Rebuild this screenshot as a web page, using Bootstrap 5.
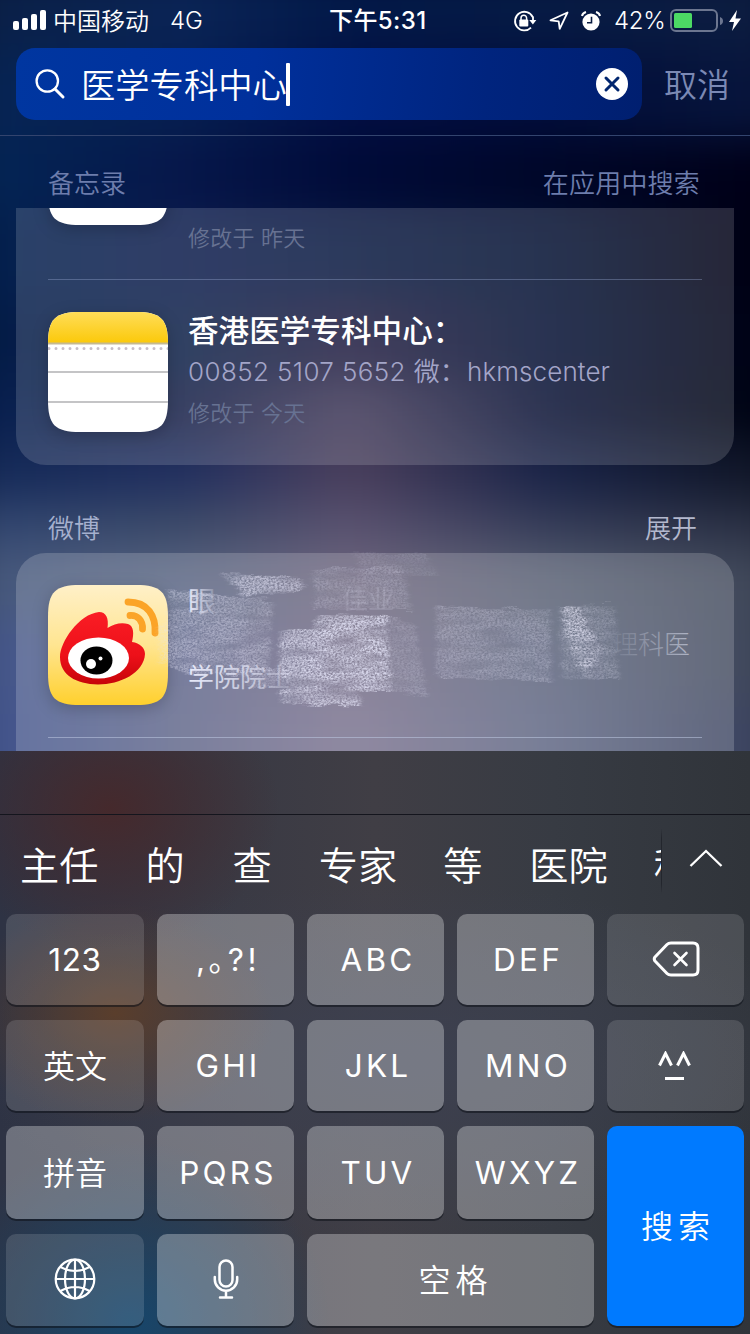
<!DOCTYPE html>
<html lang="zh-CN">
<head>
<meta charset="utf-8">
<meta name="viewport" content="width=device-width, initial-scale=1">
<title>搜索</title>
<link href="https://cdn.jsdelivr.net/npm/bootstrap@5.3.0/dist/css/bootstrap.min.css" rel="stylesheet">
<style>
body{margin:0;background:#000;color:#fff;font-family:Inter,"Noto Sans CJK SC",sans-serif;overflow:hidden}
.phone{width:750px;height:1334px;isolation:isolate}
.wallpaper{inset:-40px -40px 543px;z-index:-1;filter:blur(22px)}
.wallpaper div{flex:none}
svg{display:block;flex:none}
.status{height:48px;padding:0 8px 7px 13px;font-size:24px;line-height:40px}
.clock{left:329px;top:1px;font-weight:500;letter-spacing:.4px;white-space:nowrap}
.search-row{height:88px;padding-left:16px;border-bottom:1px solid #33446e}
.search-box{width:626px;height:72px;border-radius:19px;background:linear-gradient(95deg,#0036a0,#00309c 38%,#00247e 75%,#001f70);padding:0 14px 0 19px}
.query{font-size:34.3px;line-height:70px;font-weight:350;margin-left:15px;padding-top:4px}
.caret{width:4px;height:43px;border-radius:1px;background:#fff;margin-left:-1px}
.cancel{font-size:33px;line-height:74px;margin-left:22px;color:#7b89b4;font-weight:350}
.section-title{font-size:26px;line-height:36px;padding:0 50px 0 48px;font-weight:350}
.pinned{height:72px;padding-top:30px;color:#6d7dac}
.results{height:543px}
.glass{margin:0 16px;background:rgba(255,255,255,.15);border:0;border-radius:30px;color:#fff;padding:0 32px}
.glass.clipped{margin-top:-135px}
.glass.bright{background:rgba(255,255,255,.18);height:240px}
.item{display:flex;gap:21px;padding-top:32px}
.item + .item{border-top:1px solid rgba(160,178,220,.35)}
.item-text{margin-left:-1px}
.app{filter:drop-shadow(0 4px 8px rgba(0,0,0,.2))}
.title{font-size:30.6px;line-height:38px;font-weight:500}
.desc{font-size:26px;line-height:42px;color:#a3a5c8;font-weight:350;white-space:nowrap;letter-spacing:.2px}
.when{font-size:22px;line-height:36px;color:#677292;font-weight:350;letter-spacing:.2px}
.keyboard{height:583px;background:
 radial-gradient(ellipse 170px 140px at 110px 58px,#45292c 0,#44282b88 45%,transparent 100%),
 radial-gradient(ellipse 160px 110px at 115px 262px,#5a3e2c 0,#573c2b88 45%,transparent 100%),
 radial-gradient(ellipse 200px 180px at 130px 570px,#17466b 0,#1c4263aa 45%,transparent 100%),
 radial-gradient(ellipse 430px 180px at 400px 310px,#3c4050 0,transparent 100%),
 linear-gradient(90deg,#2e3344 0,#3a3a44 32%,#403e45 50%,#373b43 74%,#30343a 100%)}
.assist{height:64px;border-bottom:1px solid #14151d}
.cands{height:99px;font-size:39.2px;line-height:102px;font-weight:350}
.cand-list{width:661px;padding-left:20px;height:99px;white-space:nowrap}
.rule{width:1px;height:66px;margin-top:13px;background:linear-gradient(transparent,#23262d 15%,#23262d 85%,transparent)}
.keys{display:grid;grid-template-columns:138px repeat(4,137px);grid-template-rows:91px 91px 93px 92px;column-gap:13px;row-gap:15px;padding:0 6px}
.key{border:0;border-radius:10px;padding:0;color:#fff;background:rgba(255,255,255,.3);font-size:31.5px;line-height:1;box-shadow:0 2px 0 rgba(13,16,24,.55);display:flex;align-items:center;justify-content:center;letter-spacing:3.2px;text-indent:5px;font-weight:375}
.key.dim{background:rgba(255,255,255,.135)}
.key.cjk{font-size:32px;letter-spacing:0;text-indent:0;padding-top:2px;font-weight:350}
.key.go{background:#007aff;grid-row:3/5;grid-column:5}
.key.wide{grid-column:3/5}
.smudge{left:150px;top:-6px}
</style>
</head>
<body>
<div class="phone position-relative overflow-hidden d-flex flex-column">
  <div class="wallpaper position-absolute d-flex flex-column" id="wallpaper"></div>

  <header class="status position-relative d-flex align-items-center">
    <svg width="34" height="20" viewBox="0 0 34 20" style="margin-top:-2px" fill="#fff"><rect y="11" width="6" height="9" rx="2"/><rect x="9" y="8" width="6" height="12" rx="2"/><rect x="18" y="4" width="6" height="16" rx="2"/><rect x="27" width="6" height="20" rx="2"/></svg>
    <span style="margin-left:6px;padding-top:2px;font-weight:350">中国移动</span><span style="margin-left:21px;padding-top:1px;font-weight:350">4G</span>
    <span class="clock position-absolute">下午5:31</span>
    <div class="ms-auto d-flex align-items-center">
      <svg width="24" height="22" viewBox="0 0 24 22" style="margin-right:1px" fill="none" stroke="#fff" stroke-width="1.800"><path d="M19.700 7A9.300 9.300 0 1 0 18 17.600M20 6.500v4.500"/><path d="M16.300 10h7l-3.400 4.400z" fill="#fff" stroke="none"/><rect x="6.300" y="9.600" width="9" height="6.800" rx="1" fill="#fff" stroke="none"/><path d="M8 10V8a2.800 2.800 0 0 1 5.600 0v2" stroke-width="1.500"/></svg>
      <svg width="20" height="20" viewBox="0 0 20 20" style="margin-left:11px" fill="none" stroke="#fff" stroke-width="1.800" stroke-linejoin="round"><path d="M18.500 1.500 10.700 17.800 9.700 10.400 1.500 9.300z"/></svg>
      <svg width="20" height="20" viewBox="0 0 20 20" style="margin-left:12px" fill="none"><circle cx="10" cy="11" r="8.600" fill="#fff"/><path d="M1 5Q1.600 2 5 1M15 1q3.400 1 4 4" stroke="#fff" stroke-width="2"/><path d="M10.500 5.700v6H6" stroke="#0a1c42" stroke-width="1.600"/></svg>
      <span style="margin-left:13px;padding-top:1px;font-weight:350;width:50px;letter-spacing:-.3px" class="text-nowrap">42%</span>
      <svg width="72" height="24" viewBox="0 0 72 24" style="margin-left:6px"><rect x="1" y="1" width="46" height="21" rx="5" fill="none" stroke="#6c7690" stroke-width="2"/><path d="M50 8q3 1 3 4t-3 4z" fill="#6c7690"/><rect x="4" y="4" width="18" height="15" rx="1.500" fill="#4cd964"/><path d="M67 1 59 13h5l-2 9 9-12.500h-5.500z" fill="#fff"/></svg>
    </div>
  </header>

  <div class="search-row d-flex align-items-start">
    <div class="search-box d-flex align-items-center">
      <svg width="31" height="31" viewBox="0 0 31 31" fill="none" stroke="#fff" stroke-width="2.300" stroke-linecap="round"><circle cx="12.300" cy="12" r="10.700"/><path d="m20 20 8 8" stroke-width="3"/></svg>
      <span class="query">医学专科中心</span><span class="caret"></span>
      <svg class="ms-auto" width="32" height="32" viewBox="0 0 32 32"><circle cx="16" cy="16" r="16" fill="#fff"/><path d="m10 10 12 12M22 10 10 22" stroke="#01266f" stroke-width="3" stroke-linecap="round"/></svg>
    </div>
    <span class="cancel">取消</span>
  </div>

  <div class="section-title pinned d-flex justify-content-between"><span>备忘录</span><span style="letter-spacing:.2px">在应用中搜索</span></div>

  <main class="results overflow-hidden">
    <section class="card glass clipped">
      <div class="item" style="height:206px">
        <svg class="app" width="120" height="120" viewBox="0 0 120 120"><path d="M32 0H88C113 0 120 7 120 32V88C120 113 113 120 88 120H32C7 120 0 113 0 88V32C0 7 7 0 32 0z" fill="#fff"/></svg>
        <div class="item-text" style="padding-top:115px"><div class="when">修改于 昨天</div></div>
      </div>
      <div class="item" style="height:186px">
        <svg class="app" width="120" height="120" viewBox="0 0 120 120">
          <defs><clipPath id="squircle"><path d="M32 0H88C113 0 120 7 120 32V88C120 113 113 120 88 120H32C7 120 0 113 0 88V32C0 7 7 0 32 0z"/></clipPath><linearGradient id="gold" x2="0" y2="1"><stop stop-color="#ffdd58"/><stop offset="1" stop-color="#fbc90a"/></linearGradient></defs>
          <g clip-path="url(#squircle)"><rect width="120" height="120" fill="#fff"/><rect width="120" height="31" fill="url(#gold)"/><rect y="30.500" width="120" height="2" fill="#c5b991"/><path d="M1 36.500h120" stroke="#c7bfc8" stroke-width="3" stroke-linecap="round" stroke-dasharray="0 7"/><path d="M0 60h120M0 90h120" stroke="#c4c4c6" stroke-width="2"/></g>
        </svg>
        <div class="item-text"><div class="title">香港医学专科中心：</div><div class="desc" style="margin-top:1px"><span style="letter-spacing:.38px">00852 5107 5652 </span>微：<span style="margin-left:1px;letter-spacing:.1px">hkmscenter</span></div><div class="when" style="margin-top:2px">修改于 今天</div></div>
      </div>
    </section>

    <div class="section-title d-flex justify-content-between" style="padding-top:46px;height:88px;padding-right:53px;color:#a5b0ce"><span>微博</span><span style="color:#b3b8cd">展开</span></div>

    <section class="card glass bright position-relative">
      <div class="item" style="height:184px">
        <svg class="app" width="120" height="120" viewBox="0 0 120 120">
          <defs><linearGradient id="cream" x2="0" y2="1"><stop stop-color="#fff0c8"/><stop offset=".5" stop-color="#ffe591"/><stop offset="1" stop-color="#ffd02d"/></linearGradient><linearGradient id="red" x2="0" y2="1"><stop stop-color="#fa1d25"/><stop offset=".6" stop-color="#ed1019"/><stop offset="1" stop-color="#c60409"/></linearGradient></defs>
          <g clip-path="url(#squircle)"><rect width="120" height="120" fill="url(#cream)"/></g>
          <path d="M12 72C12 57 31 29 51 27C58 27 61 33 59.500 43C66 39 73 37 80 39C86 41 86 49 84 57C92 58 97 63 97 69C96 88 72 99.500 50 99.500C28 99 12 90 12 72z" fill="url(#red)"/>
          <ellipse cx="50.500" cy="73" rx="30.500" ry="20.500" fill="#fff"/><ellipse cx="48.500" cy="75.500" rx="16" ry="14" fill="#000"/><circle cx="43" cy="79" r="5" fill="#fff"/><circle cx="52.500" cy="73.500" r="2" fill="#fff"/>
          <path d="M80 17C100 17 108 31 107 48M82 30.500C90 30 95 36 94.500 44" fill="none" stroke="#fba428" stroke-width="6.800" stroke-linecap="round"/>
        </svg>
      </div>
      <div style="border-top:1px solid rgba(190,200,225,.55)"></div>
      <!-- rubbed-out post text under chalk strokes -->
      <svg class="smudge position-absolute" width="540" height="170" viewBox="166 547 540 170" overflow="visible">
        <defs>
          <filter id="chalk" x="-10%" y="-20%" width="120%" height="140%">
            <feTurbulence type="fractalNoise" baseFrequency=".45 .6" numOctaves="3" seed="4"/>
            <feColorMatrix values="0 0 0 0 1  0 0 0 0 1  0 0 0 0 1  2.200 0 0 0 -.5" result="grain"/>
            <feTurbulence type="fractalNoise" baseFrequency=".025 .1" numOctaves="3" seed="11"/>
            <feColorMatrix values="0 0 0 0 1  0 0 0 0 1  0 0 0 0 1  0 1.800 0 0 -.1" result="streak"/>
            <feTurbulence type="fractalNoise" baseFrequency=".04 .25" numOctaves="3" seed="8" result="wob"/>
            <feGaussianBlur in="SourceGraphic" stdDeviation="2 .6" result="soft"/>
            <feDisplacementMap in="soft" in2="wob" scale="9" xChannelSelector="R" yChannelSelector="G" result="shape"/>
            <feComposite in="shape" in2="grain" operator="in"/>
            <feComposite in2="streak" operator="in"/>
            <feGaussianBlur stdDeviation=".35"/>
          </filter>
          <linearGradient id="fade"><stop stop-color="#edf0ff" stop-opacity=".95"/><stop offset=".6" stop-color="#edf0ff" stop-opacity=".6"/><stop offset="1" stop-color="#edf0ff" stop-opacity=".12"/></linearGradient>
          <linearGradient id="fade-in"><stop stop-color="#c5cadb" stop-opacity=".08"/><stop offset="1" stop-color="#c5cadb" stop-opacity=".75"/></linearGradient>
          <linearGradient id="fade-out"><stop stop-color="#eef0ff" stop-opacity=".95"/><stop offset="1" stop-color="#eef0ff" stop-opacity=".15"/></linearGradient>
        </defs>
        <g font-family="Noto Sans CJK SC,sans-serif" font-size="26"><text x="188" y="612" fill="url(#fade-out)" font-size="28">眼</text><text x="188" y="687" fill="url(#fade)">学院院士</text><text x="612" y="654" fill="url(#fade-in)" font-weight="300">理科医</text><text x="342" y="609" fill="#d2d2e6" opacity=".2">佳业</text></g>
        <g filter="url(#chalk)" fill="#e2e2f5">
          <path d="M168 590 272 600 269 672 200 676 168 668z" opacity=".42"/>
          <path d="M222 574 300 577 302 590 245 597z" opacity=".62"/>
          <path d="M312 569 402 566 410 610 315 609z" opacity=".26"/>
          <path d="M352 552 427 555 438 576 365 575z" opacity=".13"/>
          <path d="M281 632 314 630 320 614 388 616 391 692 358 692 360 707 281 703 280 690 292 688 278 670z" opacity=".72"/>
          <path d="M324 620 388 620 391 690 300 686 310 640z" opacity=".5"/>
          <path d="M390 618 414 622 427 697 391 690z" opacity=".22"/>
          <path d="M437 605 550 611 551 682 436 677z" opacity=".3"/>
          <path d="M560 605 615 604 618 680 562 679z" opacity=".28"/>
          <path d="M560 605 578 606 590 632 603 646 587 679 573 657z" opacity=".65"/>
          <path d="M158 628 168 622 169 664 159 665z" opacity=".35"/>
          <path d="M240 668 290 668 289 689 248 686z" opacity=".35"/>
        </g>
      </svg>
    </section>
  </main>

  <footer class="keyboard">
    <div class="assist"></div>
    <div class="cands d-flex">
      <div class="cand-list overflow-hidden d-flex"><span>主任</span><span style="margin-left:47px">的</span><span style="margin-left:48px">查</span><span style="margin-left:47px">专家</span><span style="margin-left:46px">等</span><span style="margin-left:47px">医院</span><span style="margin-left:46px">科</span></div>
      <div class="rule"></div>
      <svg width="34" height="20" viewBox="0 0 34 20" style="margin:34px 0 0 27px" fill="none" stroke="#fff" stroke-width="2.300"><path d="m1.500 17 15.500-15 15.500 15"/></svg>
    </div>
    <div class="keys">
      <button class="key dim" style="letter-spacing:.6px;text-indent:0">123</button><button class="key" style="letter-spacing:3.500px;font-feature-settings:'halt'">,。?!</button><button class="key">ABC</button><button class="key">DEF</button>
      <button class="key dim"><svg width="48" height="36" viewBox="0 0 48 36" fill="none" stroke="#fff" stroke-width="3" stroke-linejoin="round" stroke-linecap="round" style="margin-top:-2px"><path d="M19 2H41Q46 2 46 7V29Q46 34 41 34H19Q16.500 34 15 32.500L3 20Q1.500 18 3 16L15 3.500Q16.500 2 19 2z"/><path d="m22.500 12 12 12M34.500 12l-12 12" stroke-width="2.600"/></svg></button>
      <button class="key dim cjk">英文</button><button class="key">GHI</button><button class="key">JKL</button><button class="key">MNO</button>
      <button class="key dim"><svg width="36" height="30" viewBox="0 0 36 30" fill="none" stroke="#fff" stroke-width="3" style="margin-left:-2px"><path d="M2.500 14.500 8.500 2.500l6 12M20.500 14.500l6-12 6 12M8 27.500h19"/></svg></button>
      <button class="key cjk">拼音</button><button class="key">PQRS</button><button class="key">TUV</button><button class="key">WXYZ</button>
      <button class="key go cjk" style="letter-spacing:5px;text-indent:5px">搜索</button>
      <button class="key dim"><svg width="42" height="42" viewBox="0 0 42 42" fill="none" stroke="#fff" stroke-width="2.200" style="margin-top:-3px"><circle cx="21" cy="21" r="19.300"/><ellipse cx="21" cy="21" rx="10" ry="19.300"/><path d="M21 1.500v39M1.500 21h39M6.500 9Q21 17 35.500 9M6.500 33Q21 25 35.500 33"/></svg></button>
      <button class="key"><svg width="26" height="40" viewBox="0 0 26 40" fill="none" stroke="#fff" stroke-width="2.500" stroke-linecap="round" style="margin-top:-3px"><rect x="6.500" y="1.500" width="13" height="26" rx="6.500"/><path d="M1.800 18v2.500a11.200 11.200 0 0 0 22.400 0V18M13 32v6M7 38.500h12"/></svg></button>
      <button class="key wide cjk" style="letter-spacing:5px;text-indent:10px">空格</button>
    </div>
  </footer>
</div>
<script src="https://cdn.jsdelivr.net/npm/bootstrap@5.3.0/dist/js/bootstrap.bundle.min.js"></script>
<script>
// Wallpaper bands: height, then colours from left to right; the container's blur melts them together.
const bands = [
  [90,'#0a2048','#0a2456','#021848','#061a44','#0c1c40'],
  [90,'#062454','#061f50','#020e42','#010d3a','#07153c'],
  [70,'#042454','#06164a','#000a38','#000628','#000018'],
  [90,'#04204e','#0c1c4c','#081840','#021032','#000014'],
  [80,'#041c48','#0c2048','#201c40','#031034','#000216'],
  [60,'#082050','#161e46','#403858','#081034','#000414'],
  [60,'#152a58','#223060','#4a3f5c','#1a2448','#101628'],
  [50,'#324670','#3c4a68','#5a5270','#353c58','#2a3044'],
  [70,'#46587c','#566280','#6c647c','#545c70','#40485a'],
  [80,'#44568a','#5c6288','#726a84','#58607a','#40485c'],
  [100,'#42548c','#5e6488','#786f8c','#5a6280','#3c4460']
];
document.getElementById('wallpaper').innerHTML = bands.map(([h, ...c]) =>
  `<div style="height:${h}px;background:linear-gradient(90deg,${c[0]} 5%,${c[1]} 27%,${c[2]} 47%,${c[3]} 71%,${c[4]} 95%)"></div>`).join('');
</script>
</body>
</html>
